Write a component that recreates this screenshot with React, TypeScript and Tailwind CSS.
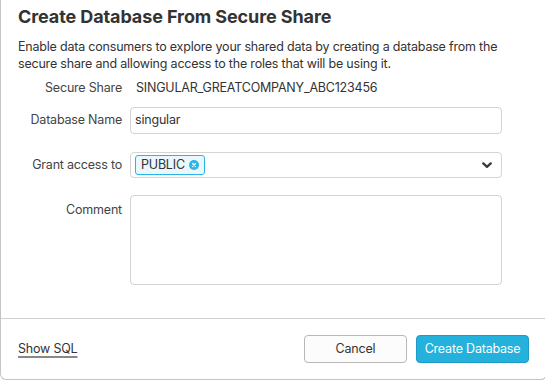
import React from "react";

function Chevron() {
  return (
    <svg width="10" height="7" viewBox="0 0 10 7" className="block">
      <path d="M1.3 1.4 L5 4.9 L8.7 1.4" fill="none" stroke="#3a3a3a" strokeWidth="2.3" strokeLinecap="round" strokeLinejoin="round" />
    </svg>
  );
}

function XCircle() {
  return (
    <svg width="10" height="10" viewBox="0 0 10 10" className="block">
      <circle cx="5" cy="5" r="5" fill="#29b5e8" />
      <path d="M3.5 3.5 L6.5 6.5 M6.5 3.5 L3.5 6.5" stroke="#fff" strokeWidth="1.3" strokeLinecap="round" />
    </svg>
  );
}

export default function App() {
  const font = { fontFamily: "Inter, 'Noto Sans', sans-serif" };
  const body = "text-[12.5px] tracking-[-0.2px]";
  return (
    <div style={font} className="w-[547px] h-[380px] bg-white border-l border-b border-r border-[#c4c4c4] rounded-b-[6px] flex flex-col text-[#333]">
      <div className="pt-[6px] pl-[17px] pr-[44px]">
        <h1 className="text-[18px] leading-[22px] font-bold text-[#333] tracking-[-0.1px]">Create Database From Secure Share</h1>
        <p className={`mt-[10px] ${body} leading-[17px] text-[#333] -mr-[30px]`}>
          Enable data consumers to explore your shared data by creating a database from the secure share and allowing access to the roles that will be using it.
        </p>
        <div className="mt-[6px] flex items-center h-[20px] gap-[8px]">
          <div className={`w-[104px] text-right ${body} text-[#444]`}>Secure Share</div>
          <div className={`pl-[6px] ${body} text-[#333]`}>SINGULAR_GREATCOMPANY_ABC123456</div>
        </div>
        <div className="mt-[9px] flex items-center gap-[8px]">
          <div className={`w-[104px] text-right ${body} text-[#444]`}>Database Name</div>
          <div className={`w-[372px] h-[27px] border border-[#d4d4d4] rounded-[4px] flex items-center pl-[4px] ${body} text-[#333]`}>singular</div>
        </div>
        <div className="mt-[18px] flex items-center gap-[8px]">
          <div className={`w-[104px] text-right ${body} text-[#444]`}>Grant access to</div>
          <div className="w-[372px] h-[26px] border border-[#d4d4d4] rounded-[4px] flex items-center pl-[4px] pr-[9px]">
            <div className={`h-[20px] flex items-center gap-[4px] pl-[5px] pr-[5px] bg-[#eaf8fd] border border-[#29b5e8] rounded-[3px] ${body} text-[#333]`}>
              <span>PUBLIC</span>
              <XCircle />
            </div>
            <div className="flex-1" />
            <Chevron />
          </div>
        </div>
        <div className="mt-[17px] flex items-start gap-[8px]">
          <div className={`w-[104px] text-right ${body} text-[#444] pt-[6px]`}>Comment</div>
          <div className="w-[372px] h-[90px] border border-[#d4d4d4] rounded-[4px]" />
        </div>
      </div>
      <div className="flex-1" />
      <div className="h-[61px] border-t border-[#d0d0d0] flex items-center pl-[17px] pr-[17px]">
        <span className={`${body} text-[#333] underline decoration-[#888] decoration-[1.5px] underline-offset-[3px]`}>Show SQL</span>
        <div className="flex-1" />
        <button className={`w-[103px] h-[28px] border border-[#b8b8b8] rounded-[4px] bg-[#fcfcfc] ${body} text-[#333]`}>Cancel</button>
        <button className={`ml-[9px] w-[113px] h-[28px] border border-[#1c9cc6] rounded-[4px] bg-[#24b1dc] ${body} text-white`}>Create Database</button>
      </div>
    </div>
  );
}
